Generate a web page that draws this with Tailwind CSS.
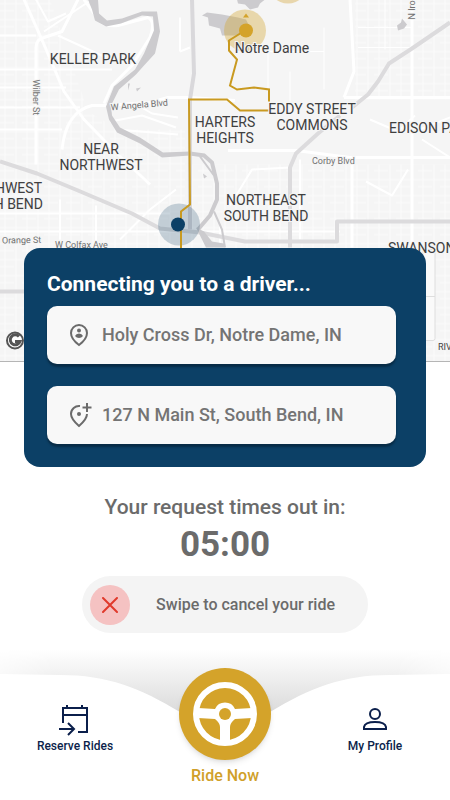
<!DOCTYPE html>
<html lang="en">
<head>
    <meta charset="UTF-8">
    <meta name="viewport" content="width=device-width, initial-scale=1.0">
    <title>Connecting you to a driver</title>
    <script src="https://cdn.jsdelivr.net/npm/@tailwindcss/browser@4"></script>
</head>
<body class="bg-white font-[Roboto,sans-serif]">
    <div class="min-h-screen flex flex-col overflow-hidden">
        <!-- Map -->
        <section class="h-[362px] border-b border-[#b5b5b5] bg-[#f5f5f5]" aria-label="Map">
            <svg class="block w-full h-full" viewBox="0 0 450 362" preserveAspectRatio="xMidYMid slice">
                <defs>
                    <pattern id="blocks" width="22" height="16" patternUnits="userSpaceOnUse">
                        <path d="M0 4H22M0 11H14M5 0V16M16 0V16" stroke="#fbfbfb" stroke-width="1" fill="none" />
                    </pattern>
                </defs>
                <rect width="450" height="362" fill="#f5f5f5" />
                <!-- Street grid -->
                <path d="M0 0H50L88 112L118 130H185V362H0Z" fill="url(#blocks)" />
                <path d="M190 165H450V362H190ZM355 0H450V100H355Z" fill="url(#blocks)" />
                <!-- Main streets -->
                <g fill="none" stroke="#fff" stroke-width="3" stroke-linejoin="round">
                    <path d="M24 0L44 45L64 92L84 120L115 152L150 185M36 165V48Q36 40 44 38L62 32L78 0" />
                    <path d="M62 150Q66 112 92 106H104L150 103L168 98H190L235 101" />
                    <path d="M84 0L100 22Q106 27 118 26L148 18Q156 22 150 38L132 66L112 86L104 104" />
                    <path d="M350 0L354 72L344 98M344 98H450M412 0V248M228 151L296 151L350 158H450M352 158V248" />
                    <path d="M110 122L142 116L176 128M116 130L178 135M135 104L152 114L178 118M180 18V52M180 52L190 48" stroke-width="2" />
                    <path d="M36 0L48 22L66 14M44 32L92 0M58 36L106 58M0 36H36M0 70H112M0 88H66M0 108H80M0 130H62" stroke-width="2" />
                    <path d="M268 52V92M268 52H324M290 72V102M324 28V90M358 28H412M358 48H412M385 0V50" stroke-width="1" />
                    <path d="M370 120L398 132L415 116M366 182L392 196L408 170M230 206L252 170L290 168M420 130L450 118M422 140L450 158" stroke-width="2" />
                    <path d="M0 232H180M0 214H170M120 240L150 210L176 190M60 200V240M96 206V246M200 232H340M220 225V245M300 160V240" stroke-width="2" />
                </g>
                <!-- Highways -->
                <g fill="none" stroke="#dcdbdd" stroke-width="4" stroke-linejoin="round">
                    <path d="M192 0L194 74L190 100V230" stroke="#d9d8db" />
                    <path d="M0 162L37 174L78 191L132 214L160 229L200 233L245 242H337V222H450" />
                    <path d="M450 23L412 49L389 64L378 82L368 95L352 108M340 116L318 134L296 154L290 168V248" />
                    <path d="M0 292H30" />
                </g>
                <!-- River and lakes -->
                <g fill="#cccbce">
                    <path d="M88 0H98L99 14L107 21L122 19L142 12H157L160 32L155 54L144 66L136 75L119 90L111 106L112 116L120 128L140 138L163 153L190 152V156L162 158L140 144L117 133L109 120L106 107L114 87L135 70L144 54L154 31L153 17L142 16L121 24L106 27L95 21L92 10Z" />
                    <path d="M202 16L207 13L222 15L238 18L246 20L250 28L246 34L235 36L222 36L220 29L209 26L208 18Z" />
                    <path d="M237 0H265L260 4L258 8L250 10L245 5L238 4Z" />
                    <path d="M397 26L401 23L402 19L407 25L404 29L398 31ZM128 84L130 84L128 91ZM136 89L141 88L137 92ZM203 174L207 177L204 179Z" />
                    <path d="M196 228L204 232L212 242L224 244V248H206L200 236Z" />
                </g>
                <path d="M190 154L204 156L212 163L217 184V200L210 216L198 230" fill="none" stroke="#cccbce" stroke-width="4" />
                <path d="M200 157L214 176M214 212L222 230L225 248" fill="none" stroke="#cccbce" stroke-width="2" />
                <rect x="423" y="250" width="12" height="91" rx="2" fill="#fafafa" stroke="#dedede" />
                <path d="M423 297H435" stroke="#dedede" />
                <!-- Pick up, destination and route -->
                <circle cx="288" cy="-16" r="20" fill="#e8d6ac" />
                <circle cx="245" cy="31" r="21" fill="#d4a32a" fill-opacity=".36" />
                <circle cx="179" cy="225" r="21" fill="#0c4066" fill-opacity=".22" />
                <path d="M245 31L229 41V51L237 60L230 86L237 90L254 88L269 90V102M269 111H240L227 100H189L190 205L181 212V250" fill="none" stroke="#c99a20" stroke-width="2" />
                <path d="M243 18L246 14L249 18Z" fill="#d4a32a" />
                <circle cx="246" cy="31" r="7" fill="#d4a32a" />
                <circle cx="178" cy="225" r="7" fill="#0c4066" />
                <!-- Place names -->
                <g font-size="14" fill="#404040" text-anchor="middle" stroke="#f5f5f5" stroke-width="2" paint-order="stroke">
                    <text x="93" y="64">KELLER PARK</text>
                    <text x="272" y="53">Notre Dame</text>
                    <text x="225" y="127">HARTERS<tspan x="225" y="143">HEIGHTS</tspan></text>
                    <text x="312" y="114">EDDY STREET<tspan x="312" y="130">COMMONS</tspan></text>
                    <text x="101" y="154">NEAR<tspan x="101" y="170">NORTHWEST</tspan></text>
                    <text x="266" y="205">NORTHEAST<tspan x="266" y="221">SOUTH BEND</tspan></text>
                    <text x="42" y="193" text-anchor="end">NORTHWEST<tspan x="43" y="209">SOUTH BEND</tspan></text>
                    <text x="389" y="133" text-anchor="start">EDISON PARK</text>
                    <text x="388" y="253" text-anchor="start">SWANSON</text>
                </g>
                <g font-size="9" fill="#707070" stroke="#f5f5f5" stroke-width="2" paint-order="stroke">
                    <text x="312" y="164">Corby Blvd</text>
                    <text x="2" y="244" transform="rotate(-1 2 244)">Orange St</text>
                    <text x="55" y="248">W Colfax Ave</text>
                    <text x="111" y="111" transform="rotate(-5 111 111)">W Angela Blvd</text>
                    <text x="33" y="80" transform="rotate(90 33 80)">Wilber St</text>
                    <text x="415" y="20" transform="rotate(-90 415 20)">N Ironwood</text>
                    <text x="438" y="350" fill="#444">RIVER PARK</text>
                </g>
                <circle cx="15" cy="341" r="8" fill="#fff" stroke="#555" stroke-width="2" />
                <path d="M19 337A5 5 0 1 0 20 342H15" fill="none" stroke="#555" stroke-width="3" />
            </svg>
        </section>

        <!-- Trip -->
        <section class="relative -mt-[114px] mx-6 px-[23px] pt-5 pb-[23px] rounded-2xl bg-[#0c4066]">
            <h1 class="text-[21px] leading-8 font-bold text-white">Connecting you to a driver...</h1>
            <div class="mt-[6px] mr-[7px] space-y-[22px]">
                <label for="pickup" class="flex items-center h-[58px] px-5 gap-[11px] rounded-[10px] bg-[#f8f8f8] shadow-[0_3px_2px_#082c47]">
                    <svg class="size-6 shrink-0" viewBox="0 0 24 24" fill="none" stroke="#6b6b6b" stroke-width="2" role="img" aria-label="Pick up">
                        <path d="M20 10C20 15 16 19 12 22C8 19 4 15 4 10A8 8 0 0 1 20 10Z" />
                        <circle cx="12" cy="7.5" r="2" fill="#6b6b6b" stroke="none" />
                        <path d="M8 13Q9 10.5 12 10.5T16 13Q14.5 15 12 15T8 13Z" fill="#6b6b6b" stroke="none" />
                    </svg>
                    <input id="pickup" type="text" readonly value="Holy Cross Dr, Notre Dame, IN" class="flex-1 min-w-0 text-lg font-medium text-[#747474] outline-none">
                </label>
                <label for="dropoff" class="flex items-center h-[58px] px-5 gap-[11px] rounded-[10px] bg-[#f8f8f8] shadow-[0_3px_2px_#082c47]">
                    <svg class="size-6 shrink-0 overflow-visible" viewBox="0 0 24 24" fill="none" stroke="#6b6b6b" stroke-width="2" role="img" aria-label="Drop off">
                        <path d="M13 3A8 8 0 0 0 4 11C4 15 8 19.5 12 23C16 19.5 20 15 20 11" />
                        <circle cx="12" cy="11" r="2" fill="#6b6b6b" stroke="none" />
                        <path d="M20 0V9M15.5 4.5H24.5" />
                    </svg>
                    <input id="dropoff" type="text" readonly value="127 N Main St, South Bend, IN" class="flex-1 min-w-0 text-lg font-medium text-[#747474] outline-none">
                </label>
            </div>
        </section>

        <!-- Countdown -->
        <section class="flex flex-col items-center pt-6 text-[#6b6b6b]">
            <p class="text-[21px] leading-8 font-medium">Your request times out in:</p>
            <p class="text-[35px] leading-[44px] font-bold">05:00</p>
            <button type="button" class="mt-[9px] flex items-center w-[286px] h-[57px] pl-2 pr-[33px] rounded-full bg-[#f4f4f4]">
                <span class="size-10 shrink-0 rounded-full bg-[#f5c2c2] flex items-center justify-center">
                    <svg class="size-4" viewBox="0 0 16 16" fill="none" stroke="#e03a2c" stroke-width="2" stroke-linecap="round">
                        <path d="M1 1L15 15M15 1L1 15" />
                    </svg>
                </span>
                <span class="flex-1 text-right text-base font-medium">Swipe to cancel your ride</span>
            </button>
        </section>

        <!-- Bottom navigation -->
        <nav class="relative mt-auto h-[150px]">
            <div class="absolute inset-0 bg-linear-to-b from-white to-[#dadada] to-[64px] [mask-image:linear-gradient(90deg,#0006,#000_12%,#000_88%,#0006)]"></div>
            <svg class="absolute inset-0 w-full h-full" viewBox="0 0 450 150" preserveAspectRatio="none">
                <path d="M0 24L60 25C108 25 140 38 180 62H270C310 38 342 25 390 25L450 24V150H0Z" fill="#fff" />
            </svg>
            <div class="relative h-full grid grid-cols-3">
                <a href="#reserve" class="flex flex-col items-center pt-[54px] text-xs leading-5 font-medium text-[#0b1f4b]">
                    <svg class="w-[30px] h-8 overflow-visible" viewBox="0 0 30 32" fill="none" stroke="#0b1f4b" stroke-width="2">
                        <path d="M3 19V4H27V28H18M3 11H27M7 1V4M22 1V4M-1 25H14M8 19L14 25L8 31" />
                    </svg>
                    Reserve Rides
                </a>
                <a href="#ride" class="flex flex-col items-center pt-[18px] text-base leading-6 font-medium text-[#d0a029]">
                    <span class="size-[92px] rounded-full bg-[#d4a32a] shadow-md flex items-center justify-center">
                        <svg class="size-16" viewBox="0 0 64 64" fill="none" stroke="#fff">
                            <circle cx="32" cy="32" r="29" stroke-width="6" />
                            <path d="M5 26L22 27A11 11 0 0 1 42 27L59 26V36L42 37Q37 41 37 45V60H27V45Q27 41 22 37L5 36Z" fill="#fff" stroke="none" />
                            <circle cx="32" cy="32" r="6" fill="#d4a32a" stroke="none" />
                        </svg>
                    </span>
                    <span class="mt-1">Ride Now</span>
                </a>
                <a href="#profile" class="flex flex-col items-center pt-[54px] text-xs leading-5 font-medium text-[#0b1f4b]">
                    <svg class="w-[30px] h-8" viewBox="0 0 30 32" fill="none" stroke="#0b1f4b" stroke-width="2">
                        <circle cx="15" cy="10" r="5" />
                        <path d="M4 25V23Q5 18 15 18T26 23V25Z" />
                    </svg>
                    My Profile
                </a>
            </div>
        </nav>
    </div>
</body>
</html>
